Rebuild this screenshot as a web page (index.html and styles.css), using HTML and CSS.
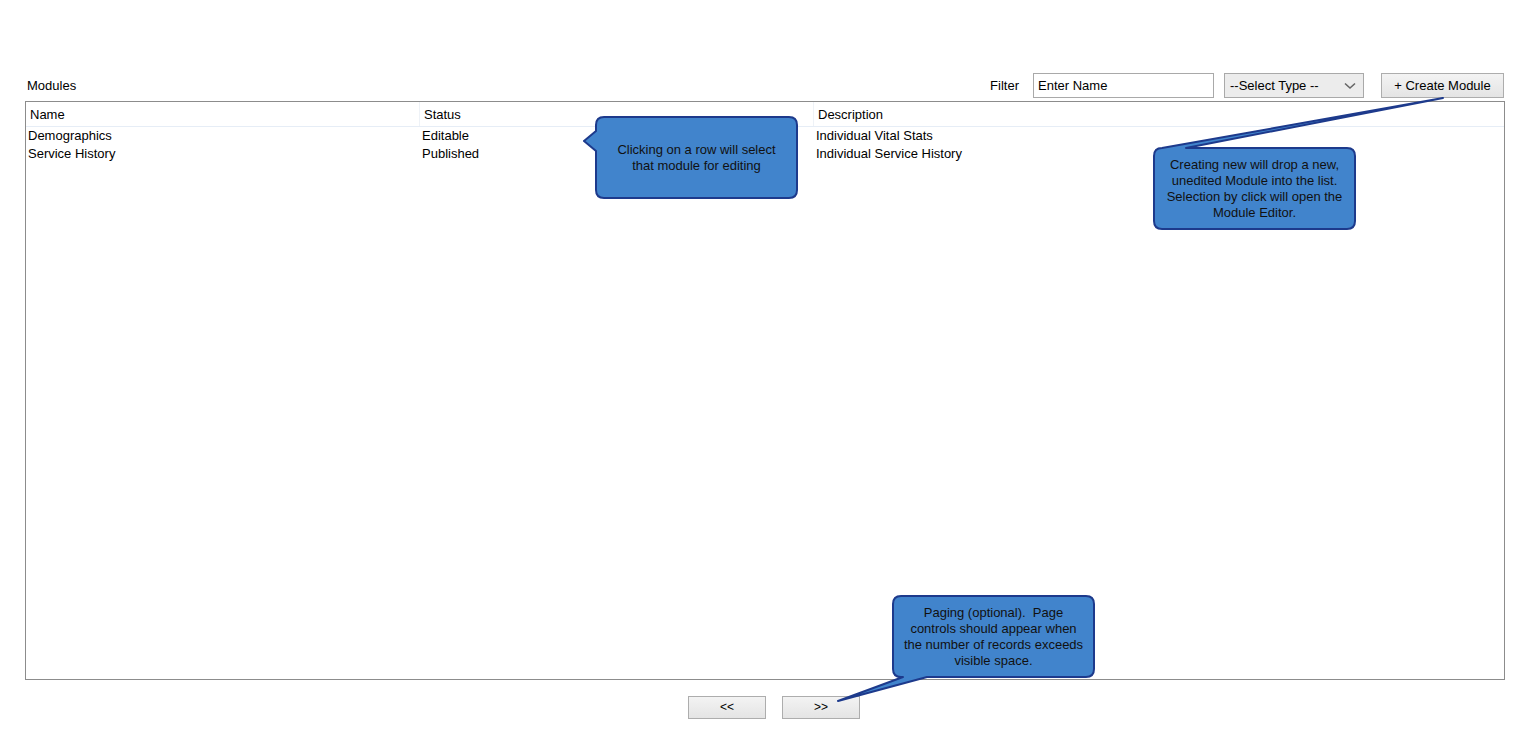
FILE: index.html
```html
<!DOCTYPE html>
<html>
<head>
<meta charset="utf-8">
<link rel="stylesheet" href="styles.css">
</head>
<body>
<div class="page">
  <div class="toolbar">
    <div class="title">Modules</div>
    <div class="controls">
      <span class="filter-label">Filter</span>
      <div class="input">Enter Name</div>
      <div class="select"><span>--Select Type --</span>
        <svg width="12" height="8" viewBox="0 0 12 8"><path d="M1 1.5 L6 6 L11 1.5" fill="none" stroke="#666" stroke-width="1.6"/></svg>
      </div>
      <div class="btn create">+ Create Module</div>
    </div>
  </div>
  <div class="list">
    <div class="head">
      <div class="hcell">Name</div>
      <div class="hcell">Status</div>
      <div class="hcell last">Description</div>
    </div>
    <div class="row">
      <div class="cell">Demographics</div>
      <div class="cell">Editable</div>
      <div class="cell">Individual Vital Stats</div>
    </div>
    <div class="row">
      <div class="cell">Service History</div>
      <div class="cell">Published</div>
      <div class="cell">Individual Service History</div>
    </div>
  </div>
  <div class="pager">
    <div class="btn page-btn">&lt;&lt;</div>
    <div class="btn page-btn">&gt;&gt;</div>
  </div>
</div>

<svg class="overlay" width="1531" height="751" viewBox="0 0 1531 751">
  <g fill="#4184cc" stroke="#1d3a8c" stroke-width="2" stroke-linejoin="round">
    <path d="M604 117 H789 Q797 117 797 125 V190 Q797 198 789 198 H604 Q596 198 596 190 V151 L584 141 L596 131 V125 Q596 117 604 117 Z"/>
    <path d="M1162 148 L1443 98 L1186 148 H1347 Q1355 148 1355 156 V221 Q1355 229 1347 229 H1162 Q1154 229 1154 221 V156 Q1154 148 1162 148 Z"/>
    <path d="M901 596 H1086 Q1094 596 1094 604 V669 Q1094 677 1086 677 H927 L838 701 L903 677 H901 Q893 677 893 669 V604 Q893 596 901 596 Z"/>
  </g>
</svg>
<div class="note note1">Clicking on a row will select<br>that module for editing</div>
<div class="note note2">Creating new will drop a new,<br>unedited Module into the list.<br>Selection by click will open the<br>Module Editor.</div>
<div class="note note3">Paging (optional).&nbsp; Page<br>controls should appear when<br>the number of records exceeds<br>visible space.</div>
</body>
</html>
```
FILE: styles.css
```css
html, body {
  margin: 0;
  padding: 0;
  background: #fff;
}
body {
  font-family: "Liberation Sans", Arial, sans-serif;
  font-size: 13px;
  color: #000;
  width: 1531px;
  height: 751px;
  position: relative;
  overflow: hidden;
}
.page {
  padding: 73px 0 0 25px;
  width: 1480px;
}
.toolbar {
  display: flex;
  justify-content: space-between;
  align-items: center;
  height: 25px;
}
.title {
  padding-left: 2px;
}
.controls {
  display: flex;
  align-items: center;
  height: 25px;
  padding-right: 1px;
}
.filter-label {
  margin-right: 14px;
}
.input {
  box-sizing: border-box;
  width: 181px;
  height: 25px;
  border: 1px solid #a9a9a9;
  padding: 0 4px;
  line-height: 23px;
  background: #fff;
}
.select {
  box-sizing: border-box;
  width: 140px;
  height: 25px;
  margin-left: 10px;
  border: 1px solid #a9a9a9;
  background: #ececec;
  display: flex;
  align-items: center;
  justify-content: space-between;
  padding: 0 7px 0 5px;
}
.btn {
  box-sizing: border-box;
  border: 1px solid #adadad;
  background: linear-gradient(#f3f3f3, #e4e4e4);
  text-align: center;
}
.create {
  width: 123px;
  height: 25px;
  line-height: 23px;
  margin-left: 17px;
}
.list {
  box-sizing: border-box;
  margin-top: 3px;
  height: 579px;
  border: 1px solid #8c8c8c;
}
.head {
  display: grid;
  grid-template-columns: 394px 394px 1fr;
  height: 25px;
  border-bottom: 1px solid #e6edf6;
  box-sizing: border-box;
}
.hcell {
  padding-left: 4px;
  padding-top: 1px;
  line-height: 23px;
  border-right: 1px solid #eef2f7;
  background: #fff;
}
.hcell.last {
  border-right: none;
}
.row {
  display: grid;
  grid-template-columns: 394px 394px 1fr;
  height: 18px;
  line-height: 18px;
}
.cell {
  padding-left: 2px;
}
.pager {
  display: flex;
  justify-content: center;
  gap: 16px;
  margin-top: 16px;
  padding-left: 18px;
}
.page-btn {
  width: 78px;
  height: 23px;
  line-height: 21px;
  font-size: 12px;
}
.overlay {
  position: absolute;
  left: 0;
  top: 0;
  pointer-events: none;
}
.note {
  position: absolute;
  width: 201px;
  text-align: center;
  font-size: 13px;
  line-height: 16px;
  color: #111;
}
.note1 {
  left: 596px;
  top: 142px;
}
.note2 {
  left: 1154px;
  top: 157px;
}
.note3 {
  left: 893px;
  top: 605px;
}
```
